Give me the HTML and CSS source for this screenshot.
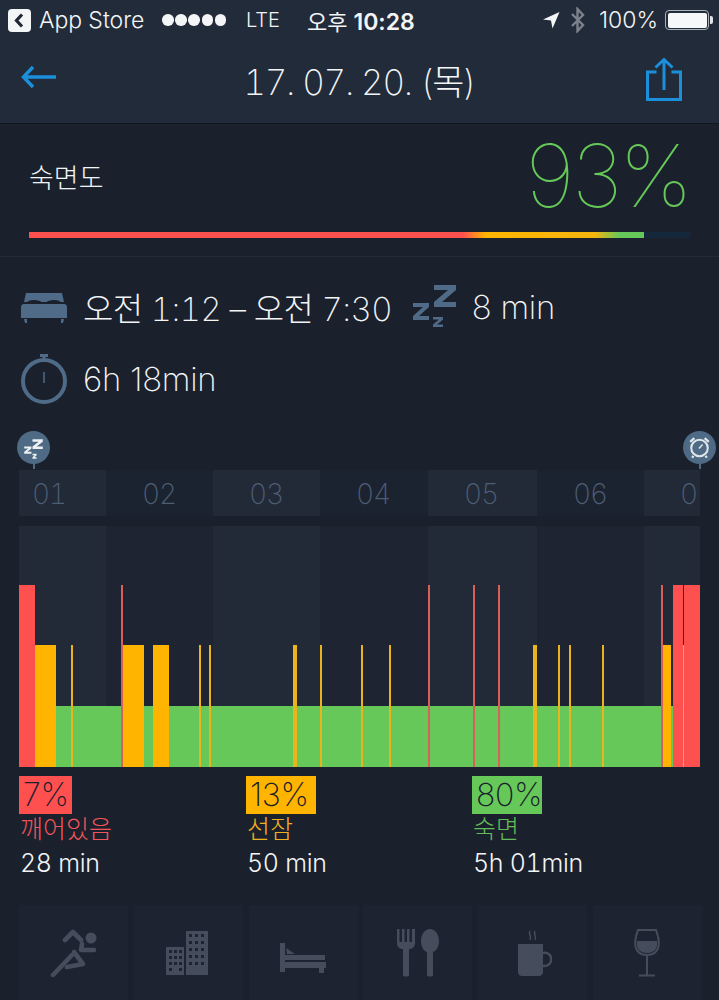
FILE: index.html
```html
<!DOCTYPE html>
<html lang="ko">
<head>
<meta charset="utf-8">
<title>수면</title>
<link rel="stylesheet" href="styles.css">
</head>
<body>
<div class="page">
  <header class="top">
    <div class="status">
      <div class="status-left">
        <svg class="back-app" viewBox="0 0 23 23"><rect width="23" height="23" rx="4" fill="#f4f5f6"/><path d="M14 5.500 8.500 11.500 14 17.500" fill="none" stroke="#1f2735" stroke-width="3.200"/></svg>
        <span class="app-store">App Store</span>
        <span class="dots"><i></i><i></i><i></i><i></i><i></i></span>
        <span class="lte">LTE</span>
      </div>
      <div class="clock"><span class="ampm">오후</span> <b>10:28</b></div>
      <div class="status-right">
        <svg class="loc" viewBox="0 0 18 18"><path d="M17.500 1 1 8.500 9 9.500 10.500 17.500Z" fill="#f4f5f6"/></svg>
        <svg class="bt" viewBox="0 0 15 26"><path d="M2 7 13 18 7.500 24V2L13 8 2 19" fill="none" stroke="#7c828c" stroke-width="2.400"/></svg>
        <span class="pct">100%</span>
        <span class="battery"><i></i></span>
      </div>
    </div>
    <nav class="nav">
      <svg class="nav-back" viewBox="0 0 36 24"><path d="M35 12H3M12 2 2.500 12 12 22" fill="none" stroke="#1c8fdb" stroke-width="3.400"/></svg>
      <h1 class="title">17. 07. 20. (목)</h1>
      <svg class="nav-share" viewBox="0 0 36 44"><path d="M10.500 15H1.500V42.500H34.500V15H25.500M18 33V3M9.500 10.500 18 2.500 26.500 10.500" fill="none" stroke="#1c8fdb" stroke-width="3"/></svg>
    </nav>
  </header>

  <section class="score">
    <div class="score-row">
      <span class="score-label">숙면도</span>
      <span class="score-value">93%</span>
    </div>
    <div class="meter"><div class="meter-fill"></div></div>
  </section>

  <section class="times">
    <div class="time-row">
      <svg class="ic-bed" viewBox="0 0 46 31"><path d="M5 1H41L43 10H3Z M0 15C0 12.500 2 12 4 12H42C44 12 46 12.500 46 15V26H0Z M3 27H6V31H4Z M40 27H43L42 31H40Z" fill="#4f6b87"/><path d="M6 10.500C7 7 19 7 21 10.500ZM25 10.500C27 7 39 7 40 10.500Z" fill="#1a202c"/></svg>
      <span class="big range"><span class="ko">오전</span> 1:12 – <span class="ko">오전</span> 7:30</span>
      <svg class="ic-zzz" viewBox="0 0 44 42"><path d="M22 0H44V5L30 17H44V22H22V17L36 5H22Z M1 18H17V22L7 31H17V35H1V31L11 22H1Z M21 32H31V34.500L25 39.500H31V42H21V39.500L27 34.500H21Z" fill="#4f6b87"/></svg>
      <span class="big plain">8 min</span>
    </div>
    <div class="time-row">
      <svg class="ic-timer" viewBox="0 0 46 50"><circle cx="23" cy="27" r="21" fill="none" stroke="#4f6b87" stroke-width="4"/><path d="M19 1.500H27M23 1.500V6" stroke="#4f6b87" stroke-width="3" fill="none"/><path d="M23 18V29" stroke="#4f6b87" stroke-width="1.500"/></svg>
      <span class="big plain">6h 18min</span>
    </div>
  </section>

  <section class="graph">
    <div class="markers">
      <div class="marker"><svg viewBox="0 0 32 32"><circle cx="16" cy="16" r="16" fill="#4e6a84"/><path d="M15 8H25V10.500L19 15H25V17.500H15V15L21 10.500H15Z M7 15H14V17L10 20H14V22H7V20L11 17H7Z M15 22H19V23.500L17 25.500H19V27H15V25.500L17 23.500H15Z" fill="#eef1f4"/></svg></div>
      <div class="marker"><svg viewBox="0 0 32 32"><circle cx="16" cy="16" r="16" fill="#4e6a84"/><circle cx="16" cy="16.500" r="8" fill="none" stroke="#dfe5ea" stroke-width="2"/><path d="M7 10.500 11 7M25 10.500 21 7M10 24 9 26M22 24 23 26" stroke="#dfe5ea" stroke-width="2.200" fill="none"/><path d="M19 13 15.500 17" stroke="#dfe5ea" stroke-width="1.500"/></svg></div>
    </div>
    <div class="hours">
      <span class="hour light first" style="width:87px"><span>01</span></span>
      <span class="hour" style="width:107px"><span>02</span></span>
      <span class="hour light" style="width:107px"><span>03</span></span>
      <span class="hour" style="width:108px"><span>04</span></span>
      <span class="hour light" style="width:109px"><span>05</span></span>
      <span class="hour" style="width:107px"><span>06</span></span>
      <span class="hour light" style="width:56px"><span>07</span></span>
    </div>
    <div class="plot">
      <span class="band light" style="width:87px"></span>
      <span class="band" style="width:107px"></span>
      <span class="band light" style="width:107px"></span>
      <span class="band" style="width:108px"></span>
      <span class="band light" style="width:109px"></span>
      <span class="band" style="width:107px"></span>
      <span class="band light" style="width:56px"></span>
      <i class="bar deep" style="left:37px;width:617px"></i>
      <i class="bar awake" style="left:0;width:16px"></i>
      <i class="bar light-s" style="left:16px;width:21px"></i>
      <i class="bar light-s thin" style="left:52px;width:2px"></i>
      <i class="bar light-s" style="left:104px;width:21px"></i>
      <i class="bar light-s" style="left:134px;width:16px"></i>
      <i class="bar light-s thin" style="left:180px;width:2px"></i>
      <i class="bar light-s thin" style="left:190px;width:2px"></i>
      <i class="bar light-s thin" style="left:274px;width:4px"></i>
      <i class="bar light-s thin" style="left:301px;width:2px"></i>
      <i class="bar light-s thin" style="left:342px;width:2px"></i>
      <i class="bar light-s thin" style="left:370px;width:2px"></i>
      <i class="bar light-s thin" style="left:514px;width:4px"></i>
      <i class="bar light-s thin" style="left:539px;width:2px"></i>
      <i class="bar light-s thin" style="left:550px;width:2px"></i>
      <i class="bar light-s thin" style="left:583px;width:2px"></i>
      <i class="bar light-s" style="left:644px;width:8px"></i>
      <i class="bar awake thin" style="left:102px;width:2px"></i>
      <i class="bar awake thin" style="left:409px;width:2px"></i>
      <i class="bar awake thin" style="left:454px;width:2px"></i>
      <i class="bar awake thin" style="left:479px;width:2px"></i>
      <i class="bar awake thin" style="left:642px;width:2px"></i>
      <i class="bar awake" style="left:654px;width:10px"></i>
      <i class="bar awake" style="left:665px;width:16px"></i>
      <i class="bar light-s thin" style="left:664px;width:1px"></i>
    </div>
  </section>

  <section class="legend">
    <div class="stat">
      <div class="stat-box awake-box">7%</div>
      <div class="stat-label awake-text">깨어있음</div>
      <div class="stat-value">28 min</div>
    </div>
    <div class="stat">
      <div class="stat-box light-box">13%</div>
      <div class="stat-label light-text">선잠</div>
      <div class="stat-value">50 min</div>
    </div>
    <div class="stat">
      <div class="stat-box deep-box">80%</div>
      <div class="stat-label deep-text">숙면</div>
      <div class="stat-value">5h 01min</div>
    </div>
  </section>

  <section class="tiles">
    <div class="tile">
      <svg class="t-run" viewBox="0 0 48 48"><g fill="none" stroke="#454c5b" stroke-width="4.600" stroke-linecap="round" stroke-linejoin="round"><path d="M15 11 23 3 31 11"/><path d="M32 15 31 21H44"/><path d="M24 23 33 35 17 38"/><path d="M22 26 3 46"/></g><circle cx="41" cy="9" r="5.500" fill="#454c5b"/></svg>
    </div>
    <div class="tile">
      <svg class="t-city" viewBox="0 0 44 44"><path class="i" d="M0 16H18V44H0Z M20 0H42V44H20Z"/><g class="w"><rect x="3" y="19" width="3" height="3"/><rect x="8" y="19" width="3" height="3"/><rect x="13" y="19" width="3" height="3"/><rect x="3" y="25" width="3" height="3"/><rect x="8" y="25" width="3" height="3"/><rect x="13" y="25" width="3" height="3"/><rect x="3" y="31" width="3" height="3"/><rect x="8" y="31" width="3" height="3"/><rect x="13" y="31" width="3" height="3"/><rect x="3" y="37" width="3" height="3"/><rect x="13" y="37" width="3" height="3"/><rect x="23" y="3" width="3" height="3"/><rect x="29" y="3" width="3" height="3"/><rect x="35" y="3" width="3" height="3"/><rect x="23" y="10" width="3" height="3"/><rect x="29" y="10" width="3" height="3"/><rect x="35" y="10" width="3" height="3"/><rect x="23" y="17" width="3" height="3"/><rect x="29" y="17" width="3" height="3"/><rect x="35" y="17" width="3" height="3"/><rect x="23" y="24" width="3" height="3"/><rect x="29" y="24" width="3" height="3"/><rect x="35" y="24" width="3" height="3"/><rect x="23" y="31" width="3" height="3"/><rect x="29" y="31" width="3" height="3"/><rect x="35" y="31" width="3" height="3"/></g></svg>
    </div>
    <div class="tile">
      <svg class="t-bed" viewBox="0 0 46 30"><path class="i" d="M0 0H5V29H0Z M5 12H45V17H5Z M5 19H46V25H44V30H39V25H5Z"/><path class="i" d="M6 5 15 11H7Z"/></svg>
    </div>
    <div class="tile">
      <svg class="t-food" viewBox="0 0 42 48"><path class="i" d="M0 0H2.500V13H5V0H7.500V13H10V0H12.500V13H15V0H18V14C18 18 15 20 12 20V46C12 48 6 48 6 46V20C3 20 0 18 0 14Z"/><path class="i" d="M33 0C38 0 42 5 42 12C42 18 39 22 36 23V46C36 48 30 48 30 46V23C27 22 24 18 24 12C24 5 28 0 33 0Z"/></svg>
    </div>
    <div class="tile">
      <svg class="t-mug" viewBox="0 0 34 46"><path class="i" d="M0 14H25V42C25 44.500 23 46 21 46H4C2 46 0 44.500 0 42Z"/><path d="M25 23C36 21 36 37 25 36" fill="none" stroke="#454c5b" stroke-width="2.500"/><path d="M12 1C10 4 14 6 12 10M17 1C15 4 19 6 17 10" fill="none" stroke="#454c5b" stroke-width="1.500"/></svg>
    </div>
    <div class="tile">
      <svg class="t-wine" viewBox="0 0 26 48"><path d="M4 1H22C27 14 26 26 13 26C0 26 -1 14 4 1ZM13 26V46M5 46.500H21" fill="none" stroke="#454c5b" stroke-width="2"/><path class="i" d="M3 12H23C24 19 21 24 13 24C5 24 2 19 3 12Z"/></svg>
    </div>
  </section>
</div>
</body>
</html>
```
FILE: styles.css
```css
* { box-sizing: border-box; }
html, body { margin: 0; padding: 0; height: 1000px; overflow: hidden; background: #1a202c; }
body { font-family: "Inter", "Noto Sans CJK KR", sans-serif; color: #f2f4f6; font-variant-numeric: tabular-nums; }
.page { width: 719px; height: 1000px; overflow: hidden; }

.top { height: 124px; background: #222b39; border-bottom: 1px solid #12161f; }
.status { height: 40px; display: grid; grid-template-columns: 294px 1fr auto; align-items: center; padding: 0 10px 0 8px; font-size: 23px; font-weight: 300; }
.status-left { display: flex; align-items: center; }
.back-app { width: 23px; height: 23px; margin-right: 8px; }
.app-store { width: 123px; }
.dots { display: flex; gap: 1.700px; width: 84px; }
.dots i { width: 11.500px; height: 11.500px; border-radius: 50%; background: #f4f5f6; }
.lte { font-size: 20px; }
.clock { padding-left: 5px; font-size: 22px; }
.clock b { font-size: 23px; font-weight: 600; font-variant-numeric: normal; }
.ampm { font-weight: 400; }
.status-right { display: flex; align-items: center; }
.loc { width: 18px; height: 18px; margin-right: 10px; }
.bt { width: 15px; height: 26px; margin-right: 14px; }
.pct { margin-right: 7px; font-size: 23px; font-variant-numeric: normal; }
.battery { position: relative; display: block; width: 44px; height: 20px; border: 1px solid #aab0b8; border-radius: 4px; padding: 1.500px; }
.battery i { display: block; height: 100%; background: #f6f7f8; border-radius: 2px; }
.battery::after { content: ""; position: absolute; right: -5px; top: 5px; width: 3px; height: 8px; background: #e0e2e5; border-radius: 0 2px 2px 0; }

.nav { height: 83px; display: grid; grid-template-columns: 1fr auto 1fr; align-items: center; padding: 0 37px; }
.nav-back { width: 36px; height: 24px; margin: -10px 0 0 -16px; }
.nav-share { width: 36px; height: 44px; justify-self: end; margin-top: -6px; }
.title { margin: -5px 0 0; font-size: 35px; font-weight: 250; letter-spacing: -1.300px; }

.score { height: 133px; padding: 0 29px; border-bottom: 1px solid #232a38; }
.score-row { height: 108px; display: flex; justify-content: space-between; align-items: center; }
.score-label { font-size: 27px; font-weight: 300; margin-top: -4px; }
.score-value { font-size: 87px; font-weight: 120; color: #66c858; letter-spacing: -3px; margin-top: -5px; font-variant-numeric: normal; }
.meter { height: 6px; background: #14283c; }
.meter-fill { width: 93%; height: 100%; background: linear-gradient(90deg, #ff5050 0, #ff5050 70.5%, #ffb400 74.3%, #f5b50f 92%, #66c858 96%, #66c858 100%); }

.times { height: 174px; padding: 14px 0 0 21px; }
.time-row { height: 72px; display: flex; align-items: center; }
.big { font-size: 33px; font-weight: 200; }
.range { letter-spacing: -0.600px; }
.plain { font-variant-numeric: normal; letter-spacing: -0.300px; }
.ko { font-weight: 300; }
.ic-bed { width: 46px; height: 31px; margin-right: 16px; }
.ic-zzz { width: 44px; height: 42px; margin: -2px 16px 0 20px; }
.ic-timer { width: 46px; height: 50px; margin-right: 16px; }

.graph { padding: 0 19px; }
.markers { display: flex; justify-content: space-between; margin: 0 -16px 0 -2px; height: 39px; }
.marker { position: relative; width: 33px; height: 33px; }
.marker svg { display: block; width: 33px; height: 33px; }
.marker::after { content: ""; position: absolute; left: 15.500px; top: 32px; width: 2px; height: 6px; background: #4e6a84; }
.hours { display: flex; height: 46px; margin-bottom: 10px; background: #1c2330; }
.hour { display: block; height: 46px; padding-left: 36px; overflow: hidden; font-size: 28px; font-weight: 200; line-height: 49px; letter-spacing: -1px; color: #4d5e74; white-space: nowrap; }
.hour.first { padding-left: 13px; }
.hour.light { background: #222a38; }
.plot { position: relative; display: flex; height: 241px; width: 681px; }
.band { display: block; height: 100%; background: #1e2431; }
.band.light { background: #222a38; }
.bar { position: absolute; bottom: 0; display: block; }
.deep { height: 61px; background: #66c858; }
.awake { height: 182px; background: #ff5050; }
.light-s { height: 122px; background: #ffb400; }
.light-s.thin { background: #eab51c; }
.awake.thin { background: #d9605a; }

.legend { display: grid; grid-template-columns: 227px 226px 1fr; padding: 9px 0 0 19px; height: 138px; }
.stat-box { width: 70px; height: 38px; padding-left: 4px; font-size: 32px; line-height: 38px; font-weight: 200; color: #1a202c; font-variant-numeric: normal; letter-spacing: -0.300px; }
.awake-box { width: 53px; background: #ff5050; }
.light-box { background: #ffb400; }
.deep-box { background: #66c858; }
.stat-label { padding-left: 1px; font-size: 25px; line-height: 31px; font-weight: 300; }
.stat-value { padding-left: 1px; font-size: 25px; line-height: 37px; font-weight: 300; letter-spacing: -0.300px; }
.awake-text { color: #f2565a; }
.light-text { color: #f0b020; }
.deep-text { color: #62bc58; }

.tiles { display: grid; grid-template-columns: repeat(6, 109px); column-gap: 5.800px; padding-left: 19px; }
.tile { height: 100px; background: #1d2330; display: flex; justify-content: center; padding-top: 24px; }
.tile svg { display: block; }
.i { fill: #454c5b; }
.w { fill: #1d2330; }
.t-run { width: 48px; height: 48px; }
.t-city { width: 44px; height: 44px; margin-top: 2px; }
.t-bed { width: 46px; height: 30px; margin-top: 14px; }
.t-food { width: 42px; height: 48px; }
.t-mug { width: 34px; height: 46px; margin: 1px 0 0 4px; }
.t-wine { width: 26px; height: 48px; }
```
